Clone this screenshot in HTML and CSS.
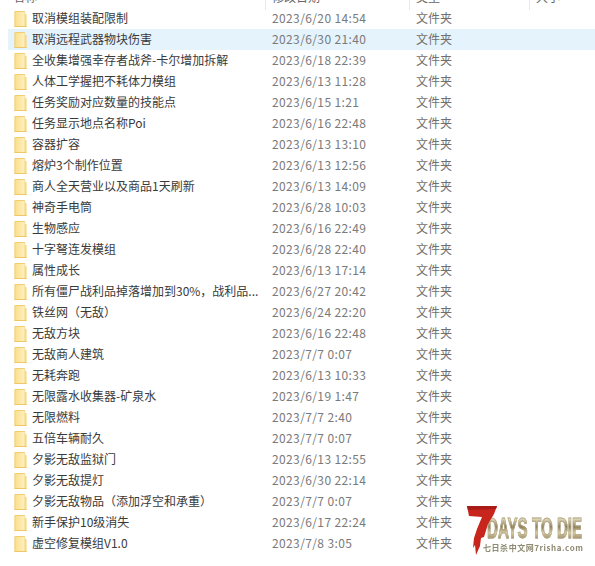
FILE: index.html
```html
<!DOCTYPE html>
<html lang="zh-CN">
<head>
<meta charset="utf-8">
<title>文件列表</title>
<link rel="stylesheet" href="styles.css">
</head>
<body>
<div class="list">
  <div class="head">
    <div class="col-name"><span>名称</span></div>
    <div class="col-date"><span>修改日期</span></div>
    <div class="col-type"><span>类型</span></div>
    <div class="col-size"><span>大小</span></div>
  </div>
  <div class="rows" id="rows">
    <div class="row"><svg class="ico" viewBox="0 0 13 17"><use href="#folder"/></svg><span class="name">取消模组装配限制</span><span class="date">2023/6/20 14:54</span><span class="type">文件夹</span></div>
    <div class="row sel"><svg class="ico" viewBox="0 0 13 17"><use href="#folder"/></svg><span class="name">取消远程武器物块伤害</span><span class="date">2023/6/30 21:40</span><span class="type">文件夹</span></div>
    <div class="row"><svg class="ico" viewBox="0 0 13 17"><use href="#folder"/></svg><span class="name">全收集增强幸存者战斧-卡尔增加拆解</span><span class="date">2023/6/18 22:39</span><span class="type">文件夹</span></div>
    <div class="row"><svg class="ico" viewBox="0 0 13 17"><use href="#folder"/></svg><span class="name">人体工学握把不耗体力模组</span><span class="date">2023/6/13 11:28</span><span class="type">文件夹</span></div>
    <div class="row"><svg class="ico" viewBox="0 0 13 17"><use href="#folder"/></svg><span class="name">任务奖励对应数量的技能点</span><span class="date">2023/6/15 1:21</span><span class="type">文件夹</span></div>
    <div class="row"><svg class="ico" viewBox="0 0 13 17"><use href="#folder"/></svg><span class="name">任务显示地点名称Poi</span><span class="date">2023/6/16 22:48</span><span class="type">文件夹</span></div>
    <div class="row"><svg class="ico" viewBox="0 0 13 17"><use href="#folder"/></svg><span class="name">容器扩容</span><span class="date">2023/6/13 13:10</span><span class="type">文件夹</span></div>
    <div class="row"><svg class="ico" viewBox="0 0 13 17"><use href="#folder"/></svg><span class="name">熔炉3个制作位置</span><span class="date">2023/6/13 12:56</span><span class="type">文件夹</span></div>
    <div class="row"><svg class="ico" viewBox="0 0 13 17"><use href="#folder"/></svg><span class="name">商人全天营业以及商品1天刷新</span><span class="date">2023/6/13 14:09</span><span class="type">文件夹</span></div>
    <div class="row"><svg class="ico" viewBox="0 0 13 17"><use href="#folder"/></svg><span class="name">神奇手电筒</span><span class="date">2023/6/28 10:03</span><span class="type">文件夹</span></div>
    <div class="row"><svg class="ico" viewBox="0 0 13 17"><use href="#folder"/></svg><span class="name">生物感应</span><span class="date">2023/6/16 22:49</span><span class="type">文件夹</span></div>
    <div class="row"><svg class="ico" viewBox="0 0 13 17"><use href="#folder"/></svg><span class="name">十字弩连发模组</span><span class="date">2023/6/28 22:40</span><span class="type">文件夹</span></div>
    <div class="row"><svg class="ico" viewBox="0 0 13 17"><use href="#folder"/></svg><span class="name">属性成长</span><span class="date">2023/6/13 17:14</span><span class="type">文件夹</span></div>
    <div class="row"><svg class="ico" viewBox="0 0 13 17"><use href="#folder"/></svg><span class="name">所有僵尸战利品掉落增加到30%，战利品...</span><span class="date">2023/6/27 20:42</span><span class="type">文件夹</span></div>
    <div class="row"><svg class="ico" viewBox="0 0 13 17"><use href="#folder"/></svg><span class="name">铁丝网（无敌）</span><span class="date">2023/6/24 22:20</span><span class="type">文件夹</span></div>
    <div class="row"><svg class="ico" viewBox="0 0 13 17"><use href="#folder"/></svg><span class="name">无敌方块</span><span class="date">2023/6/16 22:48</span><span class="type">文件夹</span></div>
    <div class="row"><svg class="ico" viewBox="0 0 13 17"><use href="#folder"/></svg><span class="name">无敌商人建筑</span><span class="date">2023/7/7 0:07</span><span class="type">文件夹</span></div>
    <div class="row"><svg class="ico" viewBox="0 0 13 17"><use href="#folder"/></svg><span class="name">无耗奔跑</span><span class="date">2023/6/13 10:33</span><span class="type">文件夹</span></div>
    <div class="row"><svg class="ico" viewBox="0 0 13 17"><use href="#folder"/></svg><span class="name">无限露水收集器-矿泉水</span><span class="date">2023/6/19 1:47</span><span class="type">文件夹</span></div>
    <div class="row"><svg class="ico" viewBox="0 0 13 17"><use href="#folder"/></svg><span class="name">无限燃料</span><span class="date">2023/7/7 2:40</span><span class="type">文件夹</span></div>
    <div class="row"><svg class="ico" viewBox="0 0 13 17"><use href="#folder"/></svg><span class="name">五倍车辆耐久</span><span class="date">2023/7/7 0:07</span><span class="type">文件夹</span></div>
    <div class="row"><svg class="ico" viewBox="0 0 13 17"><use href="#folder"/></svg><span class="name">夕影无敌监狱门</span><span class="date">2023/6/13 12:55</span><span class="type">文件夹</span></div>
    <div class="row"><svg class="ico" viewBox="0 0 13 17"><use href="#folder"/></svg><span class="name">夕影无敌提灯</span><span class="date">2023/6/30 22:14</span><span class="type">文件夹</span></div>
    <div class="row"><svg class="ico" viewBox="0 0 13 17"><use href="#folder"/></svg><span class="name">夕影无敌物品（添加浮空和承重）</span><span class="date">2023/7/7 0:07</span><span class="type">文件夹</span></div>
    <div class="row"><svg class="ico" viewBox="0 0 13 17"><use href="#folder"/></svg><span class="name">新手保护10级消失</span><span class="date">2023/6/17 22:24</span><span class="type">文件夹</span></div>
    <div class="row"><svg class="ico" viewBox="0 0 13 17"><use href="#folder"/></svg><span class="name">虚空修复模组V1.0</span><span class="date">2023/7/8 3:05</span><span class="type">文件夹</span></div>
  </div>
</div>

<div class="logo">
  <div class="logo-title">DAYS TO DIE</div>
  <div class="logo-sub">七日杀中文网7risha.com</div>
  <svg class="seven" viewBox="0 0 30 49">
    <polygon points="0,0 30,0 27,8 21,18 17,31 14,32 13,40 9,49 8,39 6,42 7,32 10,23 15,11 2,10" fill="#c8261d"/>
    <polygon points="0,0 30,0 29,3 1,4" fill="#a91b17"/>
  </svg>
</div>

<svg class="defs" width="0" height="0" aria-hidden="true">
  <defs>
    <linearGradient id="fg" x1="0" y1="0" x2="1" y2="0">
      <stop offset="0" stop-color="#fbdf8c"/>
      <stop offset="1" stop-color="#fef0c2"/>
    </linearGradient>
    <g id="folder">
      <rect x="0" y="0" width="11.5" height="17" rx="1" fill="#f1cc6c"/>
      <rect x="1" y="1" width="10" height="15.5" fill="url(#fg)"/>
      <polygon points="11,3 13,3.5 13,17 11,17" fill="#f6d886"/>
      <rect x="0" y="16" width="13" height="1" fill="#eec764"/>
    </g>
  </defs>
</svg>
</body>
</html>
```

FILE: styles.css
```css
html, body {
  margin: 0;
  padding: 0;
  background: #fff;
}

body {
  width: 595px;
  height: 566px;
  overflow: hidden;
  position: relative;
  font-family: "Noto Sans CJK SC", "Liberation Sans", sans-serif;
  font-size: 12px;
  color: #333;
}

.list {
  display: flex;
  flex-direction: column;
}

.head {
  display: grid;
  grid-template-columns: 265px 144px 120px 1fr;
  height: 8px;
  color: #666;
  line-height: 12px;
  font-size: 12px;
}

.head > div {
  height: 10px;
  overflow: hidden;
  padding-left: 6px;
  border-left: 1px solid #e8e8e8;
}

.head > .col-name {
  border-left: 0;
  padding-left: 13px;
}

.head span {
  display: block;
  margin-top: -9px;
}

.rows {
  display: flex;
  flex-direction: column;
}

.row {
  display: flex;
  align-items: center;
  height: 21px;
  margin-left: 8px;
  padding-left: 6px;
  white-space: nowrap;
  font-size: 12px;
}

.row.sel {
  background: #e5f3fd;
}

.ico {
  width: 13px;
  height: 16px;
  flex: none;
}

.name,
.date,
.type {
  margin-bottom: 2px;
}

.name {
  width: 240px;
  margin-left: 5px;
  flex: none;
  color: #3a3a3a;
}

.date {
  width: 144px;
  flex: none;
  color: #7a7a7a;
  letter-spacing: 0.38px;
}

.type {
  color: #6f6f6f;
}

.logo {
  position: absolute;
  left: 467px;
  top: 506px;
  width: 120px;
  height: 50px;
  filter: blur(0.35px);
}

.seven {
  position: absolute;
  left: 0;
  top: 0;
  width: 30px;
  height: 49px;
}

.logo-title {
  position: absolute;
  left: 20px;
  top: 10px;
  font-family: "Liberation Sans", sans-serif;
  font-weight: 700;
  font-size: 30px;
  line-height: 24px;
  white-space: nowrap;
  transform: scaleX(0.505);
  transform-origin: left top;
  background: linear-gradient(180deg, #e6dfc2 10%, #8d7f5c 45%, #d8cfa9 70%, #8f7f58);
  -webkit-background-clip: text;
  background-clip: text;
  color: transparent;
  -webkit-text-stroke: 0.9px #b3a682;
}

.logo-sub {
  position: absolute;
  left: 16px;
  top: 37px;
  font-size: 8px;
  line-height: 10px;
  font-weight: 700;
  color: #8f8a72;
  white-space: nowrap;
  letter-spacing: 0.55px;
}

.defs {
  position: absolute;
}
```
